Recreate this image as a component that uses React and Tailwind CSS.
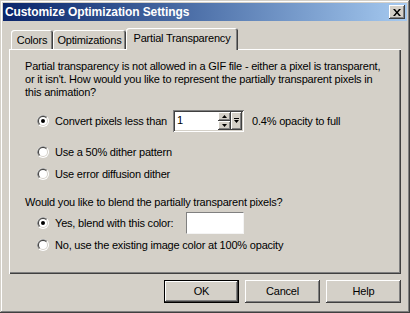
import React from 'react';

const raised = 'shadow-[inset_-1px_-1px_#404040,inset_1px_1px_#ffffff,inset_-2px_-2px_#808080,inset_2px_2px_#d4d0c8]';
const sunken = 'shadow-[inset_1px_1px_#808080,inset_-1px_-1px_#ffffff,inset_2px_2px_#404040,inset_-2px_-2px_#d4d0c8]';

const Radio = ({ checked }) => (
  <svg width="12" height="12" viewBox="0 0 12 12" className="shrink-0">
    <circle cx="6" cy="6" r="6" fill="#ffffff" />
    <path d="M10.24 1.76 A6 6 0 0 0 1.76 10.24 Z" fill="#808080" />
    <circle cx="6" cy="6" r="5" fill="#d4d0c8" />
    <path d="M9.54 2.46 A5 5 0 0 0 2.46 9.54 Z" fill="#404040" />
    <circle cx="6" cy="6" r="4" fill="#ffffff" />
    {checked && <circle cx="6" cy="6" r="2" fill="#000000" />}
  </svg>
);

const Tab = ({ label, active, width }) => (
  <div
    className={`flex items-center justify-center rounded-t-[3px] bg-[#d4d0c8] shadow-[inset_1px_1px_#ffffff,inset_-1px_0_#404040,inset_-2px_0_#808080] ${
      active ? 'relative z-10 -mb-px h-[22px] pb-[2px]' : 'h-[19px] pt-px'
    }`}
    style={{ width }}
  >
    {label}
  </div>
);

const Button = ({ children, isDefault }) => (
  <div className={`h-[23px] w-[75px] ${isDefault ? 'border border-black' : ''}`}>
    <div className={`flex h-full w-full items-center justify-center ${raised}`}>{children}</div>
  </div>
);

export default function App() {
  return (
    <div className="h-[313px] w-[410px] bg-[#d4d0c8] p-[3px] text-[11px] tracking-[-0.2px] text-black font-['Liberation_Sans',Arial,sans-serif] shadow-[inset_-1px_-1px_#404040,inset_1px_1px_#d4d0c8,inset_-2px_-2px_#808080,inset_2px_2px_#ffffff]">
      {/* title bar */}
      <div className="flex h-[18px] items-center justify-between bg-gradient-to-r from-[#0a246a] to-[#a6caf0] pl-[2px] pr-[2px]">
        <span className="text-[12px] font-bold tracking-[-0.1px] text-white">Customize Optimization Settings</span>
        <div className={`flex h-[14px] w-[16px] items-center justify-center bg-[#d4d0c8] ${raised}`}>
          <svg width="8" height="7" viewBox="0 0 8 7">
            <path d="M0 0h2l2 2.5L6 0h2L5 3.5 8 7H6L4 4.5 2 7H0l3-3.5z" fill="#000" />
          </svg>
        </div>
      </div>

      <div className="px-[6px] pt-[7px]">
        {/* tabs */}
        <div className="flex h-[21px] items-end pl-[2px]">
          <Tab label="Colors" width={42} />
          <Tab label="Optimizations" width={73} />
          <Tab label="Partial Transparency" width={112} active />
        </div>

        {/* panel */}
        <div className="h-[225px] pl-[16px] pt-[11px] shadow-[inset_1px_1px_#ffffff,inset_-1px_-1px_#404040,inset_-2px_-2px_#808080]">
          <p className="leading-[13px]">
            Partial transparency is not allowed in a GIF file - either a pixel is transparent,
            <br />
            or it isn't. How would you like to represent the partially transparent pixels in
            <br />
            this animation?
          </p>

          <div className="mt-[11px] flex h-[22px] items-center pl-[12px]">
            <Radio checked />
            <span className="ml-[6px] w-[118px]">Convert pixels less than</span>
            <div className={`flex h-[22px] w-[71px] bg-white p-[2px] ${sunken}`}>
              <div className="flex-1 pl-[2px] leading-[17px]">1</div>
              <div className="flex w-[13px] flex-col">
                <div className={`flex h-[9px] items-center justify-center bg-[#d4d0c8] ${raised}`}>
                  <svg width="5" height="3" viewBox="0 0 5 3"><path d="M2.5 0L5 3H0z" fill="#000" /></svg>
                </div>
                <div className={`flex h-[9px] items-center justify-center bg-[#d4d0c8] ${raised}`}>
                  <svg width="5" height="3" viewBox="0 0 5 3"><path d="M0 0h5L2.5 3z" fill="#000" /></svg>
                </div>
              </div>
              <div className={`flex w-[11px] items-center justify-center bg-[#d4d0c8] ${raised}`}>
                <svg width="5" height="6" viewBox="0 0 5 6">
                  <path d="M0 0h5v1H0z M0 2h5L2.5 5z" fill="#000" />
                </svg>
              </div>
            </div>
            <span className="ml-[8px]">0.4% opacity to full</span>
          </div>

          <div className="mt-[12px] flex h-[16px] items-center pl-[12px]">
            <Radio />
            <span className="ml-[6px]">Use a 50% dither pattern</span>
          </div>

          <div className="mt-[6px] flex h-[16px] items-center pl-[12px]">
            <Radio />
            <span className="ml-[6px]">Use error diffusion dither</span>
          </div>

          <p className="mt-[14px] leading-[13px]">Would you like to blend the partially transparent pixels?</p>

          <div className="mt-[3px] flex h-[22px] items-center pl-[12px]">
            <Radio checked />
            <span className="ml-[6px] w-[131px]">Yes, blend with this color:</span>
            <div className="h-[22px] w-[58px] border border-t-[#808080] border-l-[#808080] border-r-[#f4f4f4] border-b-[#f4f4f4] bg-white" />
          </div>

          <div className="mt-[3px] flex h-[16px] items-center pl-[12px]">
            <Radio />
            <span className="ml-[6px]">No, use the existing image color at 100% opacity</span>
          </div>
        </div>

        {/* buttons */}
        <div className="mt-[6px] flex justify-end gap-[6px]">
          <Button isDefault>OK</Button>
          <Button>Cancel</Button>
          <Button>Help</Button>
        </div>
      </div>
    </div>
  );
}
